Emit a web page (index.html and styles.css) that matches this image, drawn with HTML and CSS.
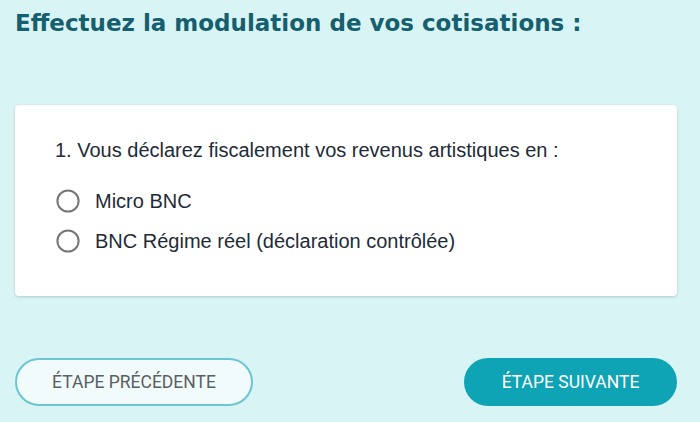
FILE: index.html
```html
<!DOCTYPE html>
<html lang="fr">
<head>
<meta charset="utf-8">
<title>Modulation des cotisations</title>
<link rel="stylesheet" href="styles.css">
</head>
<body>
<div class="page">
  <h1 class="title">Effectuez la modulation de vos cotisations :</h1>
  <div class="card">
    <p class="question">1. Vous déclarez fiscalement vos revenus artistiques en :</p>
    <ul class="options">
      <li class="option">
        <svg class="radio" viewBox="0 0 24 24" width="24" height="24"><circle cx="12" cy="12" r="10.6" fill="none" stroke="#767676" stroke-width="2"/></svg>
        <span>Micro BNC</span>
      </li>
      <li class="option">
        <svg class="radio" viewBox="0 0 24 24" width="24" height="24"><circle cx="12" cy="12" r="10.6" fill="none" stroke="#767676" stroke-width="2"/></svg>
        <span>BNC Régime réel (déclaration contrôlée)</span>
      </li>
    </ul>
  </div>
  <div class="actions">
    <button class="btn btn-prev">Étape précédente</button>
    <button class="btn btn-next">Étape suivante</button>
  </div>
</div>
</body>
</html>
```

FILE: styles.css
```css
html, body {
  margin: 0;
  background: #d9f4f5;
}
body {
  font-family: "Liberation Sans", Arial, sans-serif;
}
.page {
  padding: 8px 23px 0 15px;
}
.title {
  margin: 0;
  font-family: "DejaVu Sans", Inter, sans-serif;
  font-weight: 700;
  font-size: 23px;
  line-height: 30px;
  color: #155f6f;
}
.card {
  margin-top: 67px;
  background: #fff;
  border-radius: 4px;
  box-shadow: 0 1px 3px rgba(0, 0, 0, 0.18);
  padding: 32px 40px 35px 40px;
}
.question {
  margin: 0;
  font-size: 20px;
  line-height: 26px;
  color: #1e2b37;
}
.options {
  list-style: none;
  margin: 18px 0 0 0;
  padding: 0;
}
.option {
  display: flex;
  align-items: center;
  gap: 15px;
  height: 40px;
  padding-left: 1px;
  font-size: 20px;
  color: #1e2b37;
}
.radio {
  display: block;
  flex: none;
}
.actions {
  margin-top: 62px;
  display: flex;
  justify-content: space-between;
  align-items: center;
}
.btn {
  font-family: Roboto, sans-serif;
  font-size: 17.5px;
  text-transform: uppercase;
  border-radius: 24px;
  height: 48px;
  cursor: pointer;
}
.btn-prev {
  width: 238px;
  background: #f1fbfc;
  border: 2px solid #6cc6d2;
  color: #5a5f62;
}
.btn-next {
  width: 213px;
  background: #0ea3b5;
  border: none;
  color: #fff;
}
```
